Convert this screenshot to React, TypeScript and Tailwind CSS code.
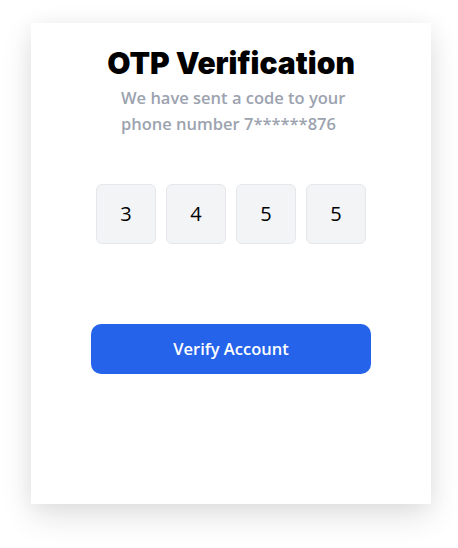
// OTP verification card

const digits = ['3', '4', '5', '5'];

export default function App() {
    return (
        <div className="min-h-[548px] w-full bg-white pl-[31px] pt-[23px] font-['Open_Sans',sans-serif]">
            <div className="flex h-[481px] w-[400px] flex-col items-center bg-white pt-[22px] shadow-[0_12px_30px_rgba(0,0,0,0.12),0_0_20px_rgba(0,0,0,0.04)]">
                {/* Header */}
                <h1 className="font-['Inter',sans-serif] text-[30px] font-black leading-[36px] text-black">
                    OTP Verification
                </h1>
                <p className="mt-[4px] w-[220px] whitespace-nowrap text-left text-[16.5px] font-semibold leading-[26px] text-[#9ca3af]">
                    We have sent a code to your
                    <br />
                    phone number 7******876
                </p>

                {/* Code boxes */}
                <div className="mt-[47px] flex gap-[10px]">
                    {digits.map((d, i) => (
                        <div
                            key={i}
                            className="flex h-[60px] w-[60px] items-center justify-center rounded-md border border-[#e5e7eb] bg-[#f3f4f6] text-[20px] text-black"
                        >
                            {d}
                        </div>
                    ))}
                </div>

                {/* Action */}
                <button className="mt-[80px] h-[50px] w-[280px] rounded-[10px] bg-[#2563eb] text-[16.5px] font-semibold text-white">
                    Verify Account
                </button>
            </div>
        </div>
    );
}
